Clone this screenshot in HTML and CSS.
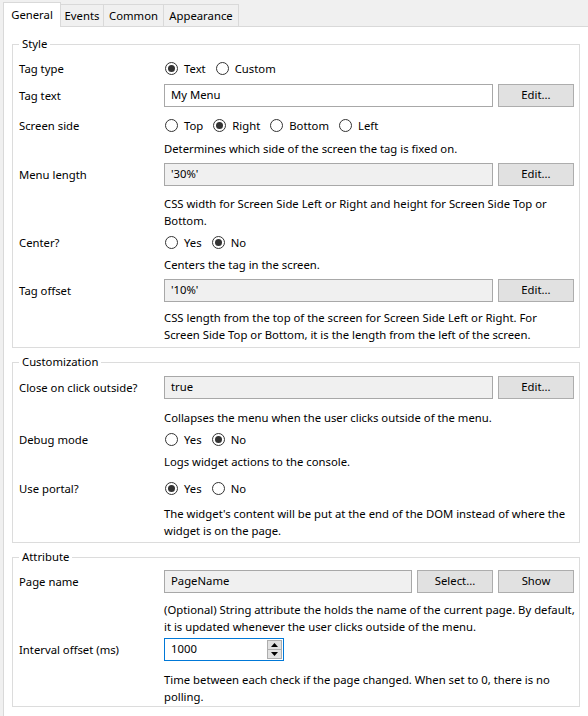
FILE: index.html
```html
<!DOCTYPE html>
<html>
<head>
<meta charset="utf-8">
<link rel="stylesheet" href="styles.css">
</head>
<body>
<div class="tabs">
  <div class="tab active tab-general">General</div>
  <div class="tab tab-events">Events</div>
  <div class="tab tab-common">Common</div>
  <div class="tab tab-appearance">Appearance</div>
</div>
<div class="panel">
  <fieldset class="group">
    <legend>Style</legend>
    <div class="row">
      <span class="label">Tag type</span>
      <div class="radios">
        <span class="radio checked"><i></i>Text</span>
        <span class="radio"><i></i>Custom</span>
      </div>
    </div>
    <div class="row m4">
      <span class="label">Tag text</span>
      <div class="ctrl"><div class="input">My Menu</div><div class="btn">Edit...</div></div>
    </div>
    <div class="row m7">
      <span class="label">Screen side</span>
      <div class="radios">
        <span class="radio"><i></i>Top</span>
        <span class="radio checked"><i></i>Right</span>
        <span class="radio"><i></i>Bottom</span>
        <span class="radio"><i></i>Left</span>
      </div>
    </div>
    <div class="desc m3">Determines which side of the screen the tag is fixed on.</div>
    <div class="row m6">
      <span class="label">Menu length</span>
      <div class="ctrl"><div class="input readonly">'30%'</div><div class="btn">Edit...</div></div>
    </div>
    <div class="desc m9">CSS width for Screen Side Left or Right and height for Screen Side Top or<br>Bottom.</div>
    <div class="row m2">
      <span class="label">Center?</span>
      <div class="radios">
        <span class="radio"><i></i>Yes</span>
        <span class="radio checked"><i></i>No</span>
      </div>
    </div>
    <div class="desc m2">Centers the tag in the screen.</div>
    <div class="row m6">
      <span class="label">Tag offset</span>
      <div class="ctrl"><div class="input readonly">'10%'</div><div class="btn">Edit...</div></div>
    </div>
    <div class="desc m7">CSS length from the top of the screen for Screen Side Left or Right. For<br>Screen Side Top or Bottom, it is the length from the left of the screen.</div>
  </fieldset>

  <fieldset class="group group-custom">
    <legend>Customization</legend>
    <div class="row m1">
      <span class="label">Close on click outside?</span>
      <div class="ctrl"><div class="input readonly">true</div><div class="btn">Edit...</div></div>
    </div>
    <div class="desc m10">Collapses the menu when the user clicks outside of the menu.</div>
    <div class="row m2">
      <span class="label">Debug mode</span>
      <div class="radios">
        <span class="radio"><i></i>Yes</span>
        <span class="radio checked"><i></i>No</span>
      </div>
    </div>
    <div class="desc m2">Logs widget actions to the console.</div>
    <div class="row m7">
      <span class="label">Use portal?</span>
      <div class="radios">
        <span class="radio checked"><i></i>Yes</span>
        <span class="radio"><i></i>No</span>
      </div>
    </div>
    <div class="desc m5">The widget's content will be put at the end of the DOM instead of where the<br>widget is on the page.</div>
  </fieldset>

  <fieldset class="group group-attr">
    <legend>Attribute</legend>
    <div class="row">
      <span class="label">Page name</span>
      <div class="ctrl"><div class="input readonly">PageName</div><div class="btn">Select...</div><div class="btn">Show</div></div>
    </div>
    <div class="desc m8">(Optional) String attribute the holds the name of the current page. By default,<br>it is updated whenever the user clicks outside of the menu.</div>
    <div class="row m3">
      <span class="label">Interval offset (ms)</span>
      <div class="ctrl">
        <div class="spin">
          <span class="spin-value">1000</span>
          <span class="spin-btns">
            <span class="spin-btn"><svg width="7" height="4" viewBox="0 0 7 4"><path d="M0 4L3.5 0L7 4Z" fill="#000"/></svg></span>
            <span class="spin-btn"><svg width="7" height="4" viewBox="0 0 7 4"><path d="M0 0L3.5 4L7 0Z" fill="#000"/></svg></span>
          </span>
        </div>
      </div>
    </div>
    <div class="desc m10">Time between each check if the page changed. When set to 0, there is no<br>polling.</div>
  </fieldset>
</div>
</body>
</html>
```
FILE: styles.css
```css
* { box-sizing: border-box; }
html, body {
  margin: 0;
  padding: 0;
}
body {
  width: 588px;
  height: 716px;
  background: #f0f0f0;
  font-family: "Noto Sans", "Open Sans", sans-serif;
  font-size: 11.3px;
  color: #000;
  overflow: hidden;
}
.tabs {
  display: flex;
  align-items: flex-end;
  height: 26px;
  padding-left: 3px;
  position: relative;
  z-index: 1;
}
.tab {
  height: 22px;
  border: 1px solid #d9d9d9;
  border-bottom: none;
  border-left: none;
  background: #f0f0f0;
  display: flex;
  align-items: center;
  justify-content: center;
  line-height: 20px;
  white-space: nowrap;
}
.tab.active {
  height: 25px;
  border-left: 1px solid #d9d9d9;
  background: #fff;
  margin-bottom: -1px;
}
.tab-general { width: 58px; }
.tab-events { width: 43px; }
.tab-common { width: 60px; }
.tab-appearance { width: 75px; }
.panel {
  margin-left: 3px;
  height: 690px;
  background: #fff;
  border-top: 1px solid #d9d9d9;
  border-left: 1px solid #d9d9d9;
  padding: 9px 8px 0 8px;
}
.group {
  margin: 0;
  border: 1px solid #dcdcdc;
  padding: 5px 5px 4px 6px;
  min-width: 0;
}
.group + .group { margin-top: 6px; }
.group-custom { padding-bottom: 3px; }
.group-attr { padding-bottom: 1px; margin-top: 7px; }
.group legend {
  padding: 0 3px;
  margin-left: 0;
  line-height: 16px;
}
.row {
  display: grid;
  grid-template-columns: 145px 1fr;
  align-items: center;
  height: 23px;
}
.radios {
  display: flex;
  align-items: center;
}
.radio {
  display: flex;
  align-items: center;
  margin-right: 9px;
}
.radio i {
  width: 13px;
  height: 13px;
  border: 1px solid #333;
  border-radius: 50%;
  margin: 0 6px 0 1px;
  display: flex;
  align-items: center;
  justify-content: center;
}
.radio.checked i::after {
  content: "";
  width: 7px;
  height: 7px;
  border-radius: 50%;
  background: #333;
}
.ctrl {
  display: flex;
  gap: 5px;
  height: 23px;
}
.input {
  flex: 1;
  height: 23px;
  border: 1px solid #a8a8a8;
  padding-left: 6px;
  line-height: 20px;
  background: #fff;
}
.input.readonly { background: #f0f0f0; }
.btn {
  width: 76px;
  height: 23px;
  border: 1px solid #adadad;
  background: #e1e1e1;
  text-align: center;
  line-height: 20px;
}
.desc {
  margin-left: 145px;
  line-height: 17px;
  white-space: nowrap;
}
.m1 { margin-top: 1px; }
.m2 { margin-top: 2px; }
.m3 { margin-top: 3px; }
.m4 { margin-top: 4px; }
.m5 { margin-top: 5px; }
.m6 { margin-top: 6px; }
.m7 { margin-top: 7px; }
.m8 { margin-top: 8px; }
.m9 { margin-top: 9px; }
.m10 { margin-top: 10px; }
.spin {
  width: 120px;
  height: 23px;
  border: 1px solid #0078d7;
  display: flex;
  align-items: stretch;
}
.spin-value {
  flex: 1;
  padding-left: 6px;
  line-height: 20px;
}
.spin-btns {
  width: 16px;
  display: flex;
  flex-direction: column;
  padding: 1px 1px 1px 0;
}
.spin-btn {
  flex: 1;
  background: #e1e1e1;
  border: 1px solid #adadad;
  display: flex;
  align-items: center;
  justify-content: center;
}
.spin-btn + .spin-btn { border-top: none; }
```
